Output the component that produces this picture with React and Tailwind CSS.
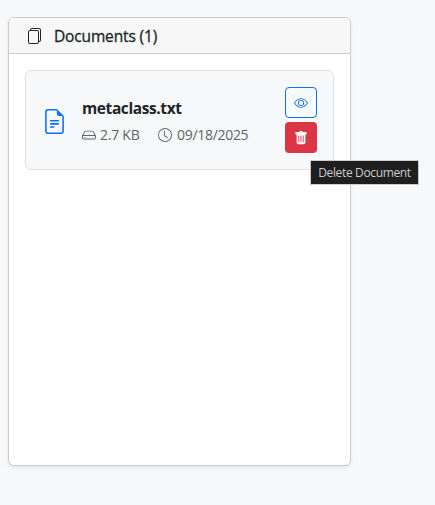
import { BsFiles, BsFileEarmarkText, BsHdd, BsClock, BsEye, BsTrashFill } from "react-icons/bs";

function DocumentRow({ name, size, date }) {
  return (
    <div className="flex h-[100px] items-center rounded-md border border-[#dee2e6] bg-[#f8f9fb] pr-4 pl-4">
      <BsFileEarmarkText className="mt-0.5 size-[25px] shrink-0 text-[#0d6efd]" />
      <div className="ml-[15px] flex-1 whitespace-nowrap">
        <div className="h-6 pt-px text-[15.5px] leading-6 font-bold tracking-[-0.4px]">{name}</div>
        <div className="mt-[5px] flex h-[21px] items-center text-[14px] leading-[21px] text-[#5c636a]">
          <BsHdd className="mr-1 size-[14px]" />
          <span className="w-[39px] tracking-[-0.25px]">{size}</span>
          <BsClock className="mr-[5px] ml-[19px] size-[14px]" />
          <span className="tracking-[-0.3px]">{date}</span>
        </div>
      </div>
      <div className="relative flex flex-col gap-1">
        <button className="flex h-[31px] w-8 items-center justify-center rounded border border-[#0d6efd] text-[#0d6efd]">
          <BsEye className="size-[14px]" />
        </button>
        <button className="flex h-[31px] w-8 items-center justify-center rounded bg-[#dc3545] text-white">
          <BsTrashFill className="size-[14px]" />
        </button>
        <div className="absolute top-[73px] left-[25px] flex h-[25px] w-[109px] items-center justify-center border border-[#cccccc] bg-[#1f1f1f] text-[12px] tracking-[-0.35px] whitespace-nowrap text-[#cccccc]">
          Delete Document
        </div>
      </div>
    </div>
  );
}

export default function App() {
  return (
    <main className="h-[505px] w-[435px] overflow-hidden bg-[#f8f9fb] pt-[17px] pl-2 font-['Open_Sans','Noto_Sans',sans-serif] text-[#212529]">
      <section className="h-[449px] w-[343px] rounded-md border border-[#cccccc] bg-white shadow-[0_2px_4px_rgba(0,0,0,0.075)]">
        <header className="flex h-9 items-center rounded-t-[5px] border-b border-[#cccccc] bg-[#f7f7f7] pl-[17px]">
          <BsFiles className="size-4" />
          <h2 className="ml-3 pt-px text-[15.5px] leading-6 font-medium tracking-[-0.15px] whitespace-nowrap [-webkit-text-stroke:0.3px_#212529]">Documents (1)</h2>
        </header>
        <div className="p-4">
          <DocumentRow name="metaclass.txt" size="2.7 KB" date="09/18/2025" />
        </div>
      </section>
    </main>
  );
}
